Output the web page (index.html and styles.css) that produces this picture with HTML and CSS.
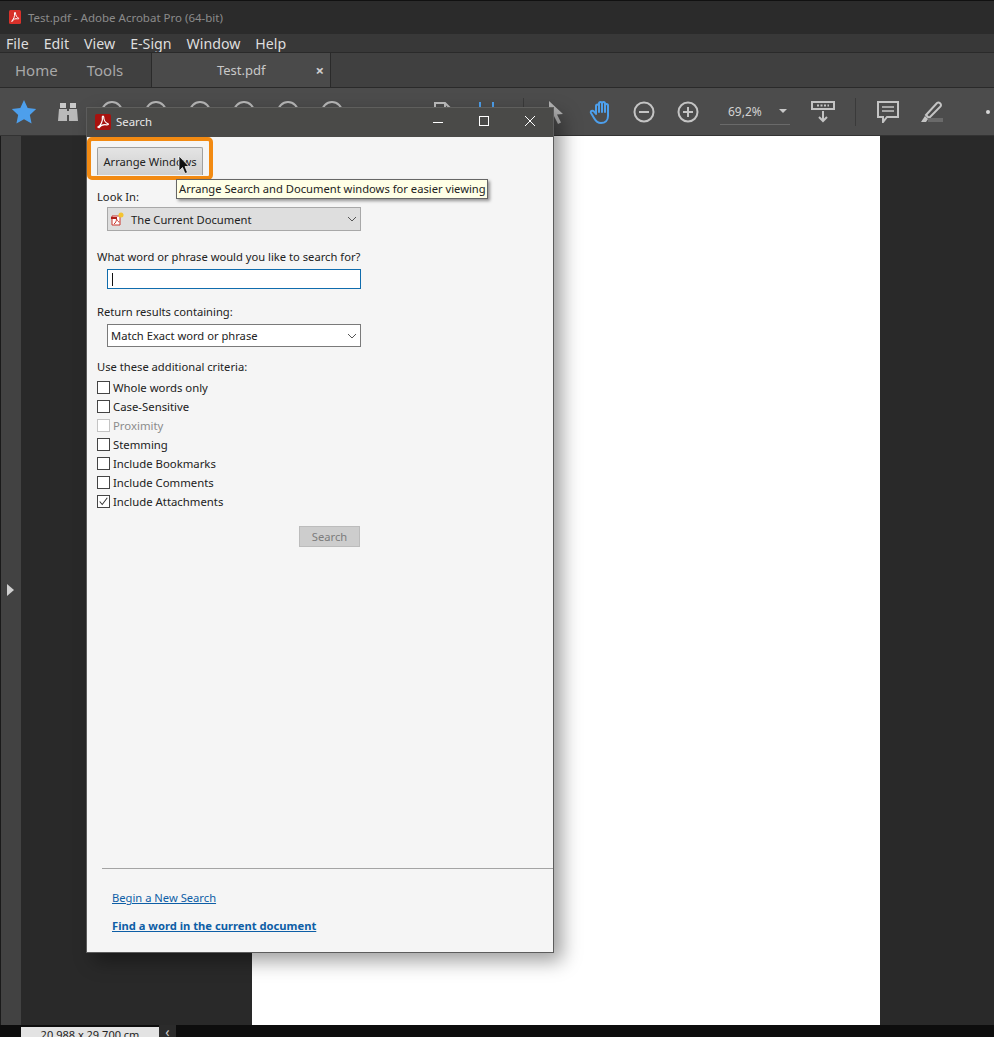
FILE: index.html
```html
<!DOCTYPE html>
<html lang="en">
<head>
    <meta charset="UTF-8">
    <title>Test.pdf - Adobe Acrobat Pro (64-bit)</title>
    <link rel="stylesheet" href="styles.css">
</head>
<body>
    <div class="app">
        <div class="titlebar">
            <svg class="pdf-icon" viewBox="0 0 12 14" width="12" height="14">
                <rect width="12" height="14" rx="1.5" fill="#d8312a"/>
                <path d="M2.5 11c2-1 3.5-5 3-8 0-1 1-1 1 0 0 2.500 1.500 4.500 3 5 1 .5 0 1-1 .8-2-.3-4 0-5.500 2.700z" fill="none" stroke="#fff" stroke-width="1"/>
            </svg>
            <span>Test.pdf - Adobe Acrobat Pro (64-bit)</span>
        </div>

        <div class="menubar">
            <span>File</span>
            <span>Edit</span>
            <span>View</span>
            <span>E-Sign</span>
            <span>Window</span>
            <span>Help</span>
        </div>

        <div class="tabbar">
            <span class="tab-link">Home</span>
            <span class="tab-link">Tools</span>
            <div class="tab-active">
                <span>Test.pdf</span>
                <span class="tab-close">×</span>
            </div>
        </div>

        <div class="toolbar">
            <div class="tool">
                <svg viewBox="0 0 24 24" width="26" height="26"><path d="M12 1l3.400 7.300 7.800 1-5.800 5.400 1.600 7.900-7-4-7 4 1.600-7.900L.8 9.300l7.800-1z" fill="#4d9fec"/></svg>
            </div>
            <div class="tool">
                <svg viewBox="0 0 22 20" width="22" height="20"><path d="M3 1h6v5H3zM13 1h6v5h-6z" fill="#c9c9c9"/><path d="M2 7h8v2h2V7h8l1 12h-9v-6h-2v6H1z" fill="#b9b9b9"/></svg>
            </div>
            <div class="tool"><span class="circle"></span></div>
            <div class="tool"><span class="circle"></span></div>
            <div class="tool"><span class="circle"></span></div>
            <div class="tool"><span class="circle"></span></div>
            <div class="tool"><span class="circle"></span></div>
            <div class="tool"><span class="circle"></span></div>
            <div class="tool tool-doc">
                <svg viewBox="0 0 20 22" width="20" height="22"><path d="M2 20V2h10l6 6v12M12 2v6h6" fill="none" stroke="#bdbdbd" stroke-width="2"/></svg>
            </div>
            <div class="tool">
                <svg viewBox="0 0 20 22" width="20" height="22"><path d="M3 1v20M16 1v20" stroke="#4d9fec" stroke-width="2"/></svg>
            </div>
            <span class="tool-sep"></span>
            <div class="tool">
                <svg viewBox="0 0 20 26" width="20" height="26"><path d="M3 2l14 13-6 .5 4 8-3 1.500-4-8-5 4z" fill="#b4b4b4"/></svg>
            </div>
            <div class="tool">
                <svg viewBox="-2 0 24 26" width="24" height="26"><path d="M6 15V7a1.500 1.500 0 0 1 3 0v6V4.500a1.500 1.500 0 0 1 3 0V13 4.500a1.500 1.500 0 0 1 3 0V13 6.500a1.500 1.500 0 0 1 3 0V17c0 4.500-3 7-7 7-3.500 0-5-1.500-7-5l-3-5c-1-2 1.500-3 3-1.500z" fill="none" stroke="#4d9fec" stroke-width="2" stroke-linejoin="round"/></svg>
            </div>
            <div class="tool">
                <svg viewBox="0 0 22 22" width="22" height="22"><circle cx="11" cy="11" r="9.500" fill="none" stroke="#c4c4c4" stroke-width="2"/><path d="M6 11h10" stroke="#c4c4c4" stroke-width="2"/></svg>
            </div>
            <div class="tool">
                <svg viewBox="0 0 22 22" width="22" height="22"><circle cx="11" cy="11" r="9.500" fill="none" stroke="#c4c4c4" stroke-width="2"/><path d="M6 11h10M11 6v10" stroke="#c4c4c4" stroke-width="2"/></svg>
            </div>
            <div class="zoom-box">
                <span>69,2%</span>
                <span class="zoom-caret"></span>
            </div>
            <div class="tool tool-fit">
                <svg viewBox="0 0 24 22" width="24" height="22"><rect x="1" y="1" width="22" height="7" fill="none" stroke="#c4c4c4" stroke-width="2"/><path d="M6 4.500h12" stroke="#c4c4c4" stroke-width="2" stroke-dasharray="2 1.500"/><path d="M12 10v10M8 16l4 4 4-4" fill="none" stroke="#c4c4c4" stroke-width="2"/></svg>
            </div>
            <span class="tool-sep tool-sep-b"></span>
            <div class="tool">
                <svg viewBox="0 0 22 22" width="22" height="22"><path d="M1 1h20v15H10l-4 5v-5H1z" fill="none" stroke="#c4c4c4" stroke-width="2"/><path d="M5 6h12M5 10h12" stroke="#c4c4c4" stroke-width="1.500"/></svg>
            </div>
            <div class="tool">
                <svg viewBox="0 0 24 22" width="24" height="22"><path d="M6 14L17 2c2-1.500 5 1 3.500 3.500L9 17z" fill="none" stroke="#c4c4c4" stroke-width="2"/><path d="M1 21l4-6 3 3-2 3z" fill="#c4c4c4"/><rect x="8" y="17" width="15" height="4" fill="#6a6a6a"/></svg>
            </div>
            <span class="tool-dot"></span>
        </div>

        <div class="workspace">
            <div class="rail"><span class="rail-arrow"></span></div>
            <div class="canvas">
                <div class="page"></div>
            </div>
        </div>

        <div class="statusbar">
            <div class="page-size">20,988 x 29,700 cm</div>
            <div class="status-btn">‹</div>
        </div>

        <div class="dialog">
            <div class="dialog-title">
                <svg class="dialog-icon" viewBox="0 0 16 16" width="16" height="16">
                    <rect width="16" height="16" rx="2" fill="#a8120f"/>
                    <path d="M3 13c3-1.500 5-6.500 4.300-10 0-1.300 1.400-1.300 1.400 0 0 3 2 6 4.300 6.800 1 .4 0 1.200-1.500 1-3-.4-5.500 0-7.500 2.800z" fill="none" stroke="#fff" stroke-width="1.200"/>
                </svg>
                <span class="dialog-name">Search</span>
                <svg class="win-btn" viewBox="0 0 46 30" width="46" height="30"><path d="M18 15.500h10" stroke="#fff"/></svg>
                <svg class="win-btn" viewBox="0 0 46 30" width="46" height="30"><rect x="18.500" y="9.500" width="9" height="9" fill="none" stroke="#fff"/></svg>
                <svg class="win-btn" viewBox="0 0 46 30" width="46" height="30"><path d="M18 9l10 10M28 9L18 19" stroke="#fff"/></svg>
            </div>

            <div class="dialog-body">
                <button class="arrange-btn">Arrange Windows</button>

                <div class="field-label look-label">Look In:</div>
                <div class="select select-grey">
                    <svg viewBox="0 0 14 14" width="14" height="14"><path d="M1 4h8v9H1z" fill="#fff" stroke="#c9342c"/><path d="M0 5h6v2H0z" fill="#b01e18"/><path d="M3 12c1.500-1 2.500-3 2.500-5 1 2 2 3 3 3" fill="none" stroke="#c9342c"/><circle cx="10" cy="3" r="2.500" fill="#f4c430"/></svg>
                    <span class="select-text">The Current Document</span>
                    <svg class="chev" viewBox="0 0 10 6" width="10" height="6"><path d="M1 1l4 4 4-4" fill="none" stroke="#555"/></svg>
                </div>

                <div class="field-label phrase-label">What word or phrase would you like to search for?</div>
                <div class="search-input"><span class="caret"></span></div>

                <div class="field-label return-label">Return results containing:</div>
                <div class="select select-white">
                    <span>Match Exact word or phrase</span>
                    <svg class="chev" viewBox="0 0 10 6" width="10" height="6"><path d="M1 1l4 4 4-4" fill="none" stroke="#555"/></svg>
                </div>

                <div class="field-label criteria-label">Use these additional criteria:</div>
                <ul class="check-list">
                    <li><span class="check"></span>Whole words only</li>
                    <li><span class="check"></span>Case-Sensitive</li>
                    <li class="disabled"><span class="check"></span>Proximity</li>
                    <li><span class="check"></span>Stemming</li>
                    <li><span class="check"></span>Include Bookmarks</li>
                    <li><span class="check"></span>Include Comments</li>
                    <li>
                        <span class="check"><svg viewBox="0 0 13 13" width="11" height="11"><path d="M2 6.500l3 3.500 6-8" fill="none" stroke="#333" stroke-width="1.200"/></svg></span>
                        Include Attachments
                    </li>
                </ul>

                <div class="search-row">
                    <button class="search-btn">Search</button>
                </div>

                <div class="dialog-footer">
                    <a class="link" href="#">Begin a New Search</a>
                    <a class="link link-bold" href="#">Find a word in the current document</a>
                </div>
            </div>
        </div>

        <div class="highlight"></div>
        <div class="tooltip">Arrange Search and Document windows for easier viewing</div>
        <svg class="pointer" viewBox="0 0 12 20" width="12" height="20"><path d="M1 1v15l3.500-3.500 2.500 6 2.500-1-2.500-6H11z" fill="#111" stroke="#fff" stroke-width=".7"/></svg>
    </div>
</body>
</html>
```

FILE: styles.css
```css
* {
    margin: 0;
    padding: 0;
    box-sizing: border-box;
}

body {
    font-family: "Noto Sans", "Open Sans", sans-serif;
    background: #292929;
    overflow: hidden;
}

.app {
    position: relative;
    width: 994px;
    height: 1037px;
    display: flex;
    flex-direction: column;
    overflow: hidden;
}

/* window chrome */
.titlebar {
    height: 34px;
    flex: none;
    display: flex;
    align-items: center;
    gap: 7px;
    padding: 0 0 1px 9px;
    background: #2b2b2b;
    border-top: 1px solid #111;
    color: #8b8b8b;
    font-size: 11.5px;
}

.pdf-icon {
    flex: none;
}

.menubar {
    height: 18px;
    flex: none;
    display: flex;
    align-items: center;
    gap: 15px;
    padding: 0 0 0 6px;
    background: #383838;
    color: #dedede;
    font-size: 14.2px;
}

.tabbar {
    height: 36px;
    flex: none;
    display: flex;
    align-items: center;
    background: #404040;
    border-top: 1px solid #2a2a2a;
    border-bottom: 1px solid #2a2a2a;
    color: #a8a8a8;
    font-size: 15px;
}

.tab-link {
    margin-left: 15px;
    margin-right: 15px;
}

.tab-link + .tab-link {
    margin-left: 14px;
}

.tab-active {
    align-self: stretch;
    width: 180px;
    margin-left: 13px;
    display: flex;
    align-items: center;
    justify-content: center;
    position: relative;
    background: #4a4a4a;
    border-left: 1px solid #2a2a2a;
    border-right: 1px solid #2a2a2a;
    color: #c8c8c8;
    font-size: 13px;
}

.tab-close {
    position: absolute;
    right: 6px;
    font-size: 15px;
    font-weight: 700;
    color: #d0d0d0;
}

.toolbar {
    height: 48px;
    flex: none;
    display: flex;
    align-items: center;
    padding-left: 2px;
    background: #4c4c4c;
    border-bottom: 1px solid #333;
}

.tool {
    width: 44px;
    height: 46px;
    flex: none;
    display: flex;
    align-items: center;
    justify-content: center;
}

.tool-doc {
    margin-left: 67px;
}

.tool-sep {
    width: 1px;
    height: 28px;
    flex: none;
    margin: 0 10px 0 14px;
    background: #3a3a3a;
}

.tool-sep-b {
    margin: 0 10px 0 10px;
}

.circle {
    width: 22px;
    height: 22px;
    border: 2px solid #b8b8b8;
    border-radius: 50%;
}

.zoom-box {
    width: 70px;
    height: 26px;
    margin-left: 10px;
    flex: none;
    display: flex;
    align-items: center;
    padding-left: 8px;
    border-bottom: 1px solid #6a6a6a;
    color: #d2d2d2;
    font-size: 12px;
}

.zoom-caret {
    margin-left: 17px;
    border-left: 4px solid transparent;
    border-right: 4px solid transparent;
    border-top: 4px solid #c8c8c8;
}

.tool-fit {
    margin-left: 11px;
}

.tool-dot {
    width: 4px;
    height: 4px;
    margin-left: 32px;
    border-radius: 50%;
    background: #d8d8d8;
}

/* document area */
.workspace {
    flex: 1;
    display: flex;
    min-height: 0;
}

.rail {
    width: 21px;
    flex: none;
    display: flex;
    align-items: center;
    justify-content: center;
    padding-right: 2px;
    background: #424242;
    border-left: 1px solid #1a1a1a;
}

.rail-arrow {
    margin-top: 18px;
    border-top: 6px solid transparent;
    border-bottom: 6px solid transparent;
    border-left: 7px solid #cfcfcf;
}

.canvas {
    flex: 1;
    padding-left: 231px;
    background: #292929;
}

.page {
    width: 628px;
    height: 100%;
    background: #fff;
}

.statusbar {
    height: 12px;
    flex: none;
    display: flex;
    padding-left: 21px;
    background: #0d0d0d;
    overflow: hidden;
}

.page-size {
    width: 138px;
    height: 18px;
    margin-top: 2px;
    background: #e3e3e3;
    color: #222;
    font-size: 11px;
    line-height: 16px;
    text-align: center;
}

.status-btn {
    width: 17px;
    background: #2b2b2b;
    color: #ccc;
    font-size: 14px;
    line-height: 14px;
    text-align: center;
}

/* search window */
.dialog {
    position: absolute;
    left: 86px;
    top: 107px;
    width: 468px;
    height: 846px;
    display: flex;
    flex-direction: column;
    background: #f5f5f5;
    border: 1px solid #5c5c5c;
    border-top: 0;
    box-shadow: 8px 8px 18px rgba(0, 0, 0, 0.38);
}

.dialog-title {
    height: 30px;
    flex: none;
    display: flex;
    align-items: center;
    padding: 0 0 2px 8px;
    background: #4a4a48;
    border-top: 1px solid #5f5f5d;
    color: #e8e8e8;
    font-size: 11.4px;
}

.dialog-icon {
    flex: none;
}

.dialog-name {
    flex: 1;
    margin-left: 5px;
}

.win-btn {
    flex: none;
}

.dialog-body {
    flex: 1;
    display: flex;
    flex-direction: column;
    padding: 10px 0 0 10px;
    color: #222;
    font-size: 11.2px;
}

.arrange-btn {
    width: 106px;
    height: 28px;
    font: inherit;
    color: #222;
    background: linear-gradient(#e4e4e4, #cfcfcf);
    border: 1px solid #a0a0a0;
    border-bottom: 0;
    border-radius: 2px 2px 0 0;
}

.field-label {
    line-height: 16px;
}

.look-label {
    margin-top: 14px;
}

.select {
    width: 254px;
    margin: 2px 0 0 10px;
    display: flex;
    align-items: center;
    padding-left: 3px;
}

.select-grey {
    height: 24px;
    background: #dedede;
    border: 1px solid #a8a8a8;
}

.select-white {
    height: 23px;
    margin-top: 4px;
    background: #fff;
    border: 1px solid #7a7a7a;
}

.select-text {
    margin-left: 6px;
}

.chev {
    margin-left: auto;
    margin-right: 3px;
}

.phrase-label {
    margin-top: 18px;
}

.search-input {
    width: 254px;
    height: 20px;
    margin: 4px 0 0 10px;
    padding: 3px 0 0 4px;
    background: #fff;
    border: 1px solid #0f6cad;
}

.caret {
    display: block;
    width: 1px;
    height: 13px;
    background: #111;
}

.return-label {
    margin-top: 15px;
}

.criteria-label {
    margin-top: 12px;
}

.check-list {
    list-style: none;
    margin-top: 3px;
    font-size: 11.35px;
}

.check-list li {
    height: 19px;
    display: flex;
    align-items: center;
    gap: 3px;
}

.check-list .disabled {
    color: #8c8c8c;
}

.check {
    width: 13px;
    height: 13px;
    flex: none;
    display: flex;
    align-items: center;
    justify-content: center;
    background: #fff;
    border: 1px solid #444;
}

.disabled .check {
    border-color: #c4c4c4;
}

.search-row {
    width: 263px;
    margin-top: 15px;
    display: flex;
    justify-content: flex-end;
}

.search-btn {
    width: 61px;
    height: 21px;
    font: inherit;
    color: #7c7c7c;
    background: #cdcdcd;
    border: 1px solid #bcbcbc;
}

.dialog-footer {
    margin: auto 0 0 5px;
    height: 84px;
    display: flex;
    flex-direction: column;
    align-items: flex-start;
    gap: 12px;
    padding: 21px 0 0 10px;
    border-top: 1px solid #a4a4a4;
}

.link {
    color: #0d5ea6;
    line-height: 16px;
}

.link-bold {
    font-weight: 700;
}

/* things on top of the dialog */
.highlight {
    position: absolute;
    left: 87px;
    top: 137px;
    width: 126px;
    height: 43px;
    border: 4px solid #f28a12;
    border-radius: 5px;
}

.tooltip {
    position: absolute;
    left: 176px;
    top: 179px;
    width: 312px;
    height: 20px;
    padding-left: 2px;
    background: #ffffe6;
    border: 1px solid #666;
    box-shadow: 2px 2px 3px rgba(0, 0, 0, 0.4);
    color: #222;
    font-size: 11.2px;
    line-height: 18px;
    white-space: nowrap;
}

.pointer {
    position: absolute;
    left: 178px;
    top: 155px;
}
```
